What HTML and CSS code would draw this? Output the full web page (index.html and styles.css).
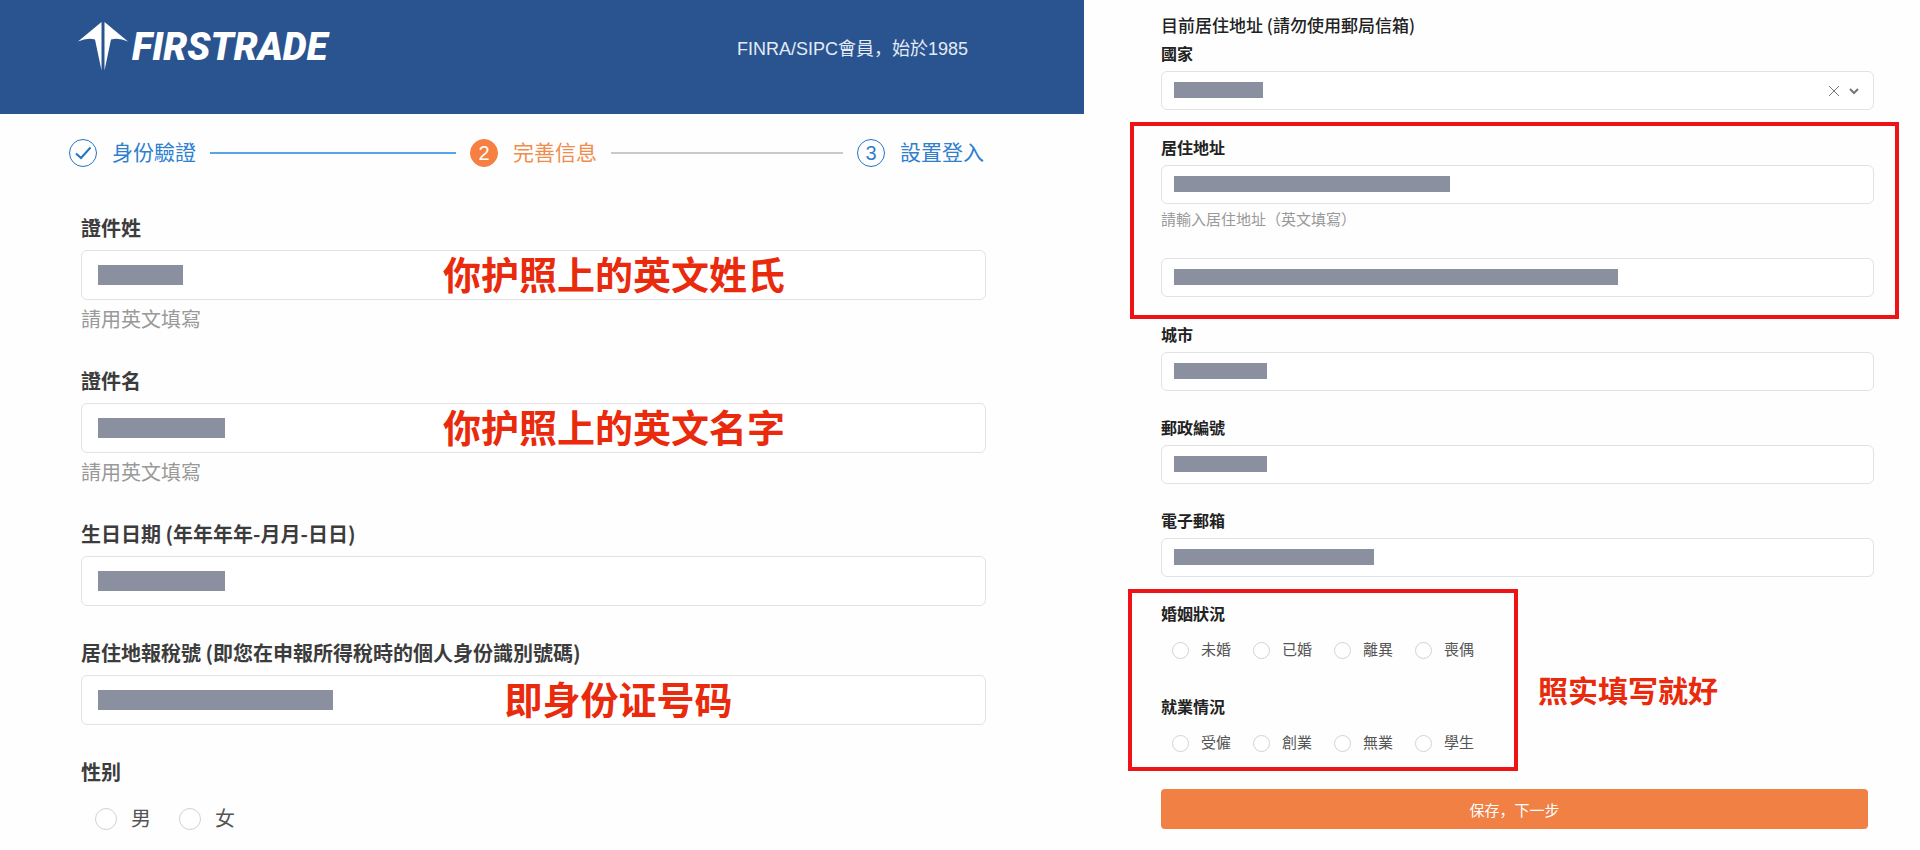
FILE: index.html
```html
<!DOCTYPE html>
<html lang="zh-Hans">
<head>
<meta charset="utf-8">
<title>Firstrade 開戶申請</title>
<link rel="stylesheet" href="styles.css">
</head>
<body>
<main class="page">
  <section class="panel">
    <header class="topbar">
      <div class="brand">
        <svg class="brand-mark" viewBox="0 0 50 50" aria-hidden="true">
          <path d="M23.500 0V48.500L17 17.500Q9 15.500 0 19.500Z"/>
          <path d="M26.500 0V48.500L33 17.500Q41 15.500 50 19.500Z"/>
        </svg>
        <span class="brand-name">FIRSTRADE</span>
      </div>
      <span class="membership">FINRA/SIPC會員，始於1985</span>
    </header>

    <ol class="steps">
      <li class="step">
        <span class="step-dot"><svg viewBox="0 0 28 28" aria-hidden="true"><path d="M7 14.500L12 19L21.500 8.500"/></svg></span>
        <span>身份驗證</span>
      </li>
      <li class="step-line step-line-done" aria-hidden="true"></li>
      <li class="step step-current">
        <span class="step-dot">2</span>
        <span>完善信息</span>
      </li>
      <li class="step-line" aria-hidden="true"></li>
      <li class="step">
        <span class="step-dot">3</span>
        <span>設置登入</span>
      </li>
    </ol>

    <form class="form form-large">
      <div class="field">
        <label class="label" for="surname">證件姓</label>
        <div class="control">
          <input class="input" id="surname" type="text">
          <span class="mask mask-surname"></span>
          <span class="note note-over">你护照上的英文姓氏</span>
        </div>
        <p class="hint">請用英文填寫</p>
      </div>
      <div class="field">
        <label class="label" for="given">證件名</label>
        <div class="control">
          <input class="input" id="given" type="text">
          <span class="mask mask-name"></span>
          <span class="note note-over">你护照上的英文名字</span>
        </div>
        <p class="hint">請用英文填寫</p>
      </div>
      <div class="field">
        <label class="label" for="birth">生日日期 (年年年年-月月-日日)</label>
        <div class="control">
          <input class="input" id="birth" type="text">
          <span class="mask mask-name"></span>
        </div>
      </div>
      <div class="field">
        <label class="label" for="tax">居住地報稅號 (即您在申報所得稅時的個人身份識別號碼)</label>
        <div class="control">
          <input class="input" id="tax" type="text">
          <span class="mask mask-tax"></span>
          <span class="note note-over note-tax">即身份证号码</span>
        </div>
      </div>
      <fieldset class="choice">
        <legend class="label">性别</legend>
        <div class="options">
          <label class="option"><input class="radio" type="radio" name="sex">男</label>
          <label class="option"><input class="radio" type="radio" name="sex">女</label>
        </div>
      </fieldset>
    </form>
  </section>

  <section class="panel panel-address">
    <form class="form form-small">
      <h2 class="title">目前居住地址 (請勿使用郵局信箱)</h2>
      <div class="field">
        <label class="label" for="country">國家</label>
        <div class="control">
          <select class="input" id="country"><option></option></select>
          <span class="mask mask-country"></span>
          <span class="select-tools">
            <button class="clear" type="button" aria-label="清除"><svg viewBox="0 0 12 12" aria-hidden="true"><path d="M1 1L11 11M11 1L1 11"/></svg></button>
            <svg class="chevron" viewBox="0 0 10 8" aria-hidden="true"><path d="M1 2L5 6L9 2"/></svg>
          </span>
        </div>
      </div>

      <div class="frame frame-address">
        <div class="field">
          <label class="label" for="address">居住地址</label>
          <div class="control">
            <input class="input" id="address" type="text">
            <span class="mask mask-address"></span>
          </div>
          <p class="hint">請輸入居住地址（英文填寫）</p>
          <div class="control">
            <input class="input" type="text" aria-label="居住地址第二行">
            <span class="mask mask-address-more"></span>
          </div>
        </div>
      </div>

      <div class="contact">
        <div class="field">
          <label class="label" for="city">城市</label>
          <div class="control">
            <input class="input" id="city" type="text">
            <span class="mask mask-city"></span>
          </div>
        </div>
        <div class="field">
          <label class="label" for="post">郵政編號</label>
          <div class="control">
            <input class="input" id="post" type="text">
            <span class="mask mask-city"></span>
          </div>
        </div>
        <div class="field">
          <label class="label" for="email">電子郵箱</label>
          <div class="control">
            <input class="input" id="email" type="email">
            <span class="mask mask-email"></span>
          </div>
        </div>
      </div>

      <div class="status">
        <div class="frame frame-status">
          <fieldset class="choice">
            <legend class="label">婚姻狀況</legend>
            <div class="options">
              <label class="option"><input class="radio" type="radio" name="marriage">未婚</label>
              <label class="option"><input class="radio" type="radio" name="marriage">已婚</label>
              <label class="option"><input class="radio" type="radio" name="marriage">離異</label>
              <label class="option"><input class="radio" type="radio" name="marriage">喪偶</label>
            </div>
          </fieldset>
          <fieldset class="choice">
            <legend class="label">就業情況</legend>
            <div class="options">
              <label class="option"><input class="radio" type="radio" name="job">受僱</label>
              <label class="option"><input class="radio" type="radio" name="job">創業</label>
              <label class="option"><input class="radio" type="radio" name="job">無業</label>
              <label class="option"><input class="radio" type="radio" name="job">學生</label>
            </div>
          </fieldset>
        </div>
        <span class="note note-side">照实填写就好</span>
      </div>

      <button class="submit" type="submit">保存，下一步</button>
    </form>
  </section>
</main>
</body>
</html>
```
FILE: styles.css
```css
* {
  box-sizing: border-box;
}

body {
  margin: 0;
  background: #fefefe;
  color: #3c3c3c;
  font-family: "Liberation Sans", "Noto Sans CJK SC", sans-serif;
}

.page {
  display: grid;
  grid-template-columns: 1084fr 836fr;
}

.panel-address {
  padding: 14px 46px 20px 77px;
}

/* Header */

.topbar {
  display: flex;
  justify-content: space-between;
  align-items: flex-start;
  height: 114px;
  padding: 22px 116px 0 78px;
  background: #2a548f;
}

.brand {
  display: flex;
  align-items: center;
  gap: 4px;
}

.brand-mark {
  width: 50px;
  height: 50px;
  fill: #fff;
}

.brand-name {
  color: #fff;
  font: italic 900 38px/50px Roboto, "Liberation Sans", sans-serif;
}

.membership {
  margin-top: 15px;
  color: #e3ebf6;
  font-size: 18px;
  line-height: 24px;
}

/* Progress steps */

.steps {
  display: flex;
  align-items: center;
  gap: 14px;
  margin: 25px 100px 47px 69px;
  padding: 0;
  list-style: none;
}

.step {
  display: flex;
  align-items: center;
  gap: 15px;
  color: #2f7fcf;
  font-size: 21px;
  line-height: 28px;
}

.step-dot {
  display: flex;
  align-items: center;
  justify-content: center;
  width: 28px;
  height: 28px;
  border: 1px solid #2474c4;
  border-radius: 50%;
  font-size: 20px;
}

.step-dot svg {
  flex: none;
  width: 28px;
  height: 28px;
  fill: none;
  stroke: #2474c4;
  stroke-width: 2;
}

.step-current {
  color: #f08c4c;
}

.step-current .step-dot {
  border-color: #f77f41;
  background: #f77f41;
  color: #fff;
}

.step-line {
  flex: 233;
  height: 2px;
  background: #c9c9c9;
}

.step-line-done {
  flex: 247;
  background: #56a5e6;
}

/* Forms */

.form-large {
  --size: 20px;
  --hint-size: 20px;
  --line: 28px;
  --label-gap: 8px;
  --control: 50px;
  --inset: 17px;
  --mask: 20px;
  --mask-top: 15px;
  --radio: 22px;
  --radio-gap: 14px;
  display: flex;
  flex-direction: column;
  gap: 33px;
  margin: 0 98px 16px 81px;
}

.form-small {
  --size: 16px;
  --hint-size: 15px;
  --line: 20px;
  --label-gap: 8px;
  --control: 39px;
  --inset: 13px;
  --mask: 16px;
  --mask-top: 11px;
  --radio: 17px;
  --radio-gap: 12px;
  color: #222;
}

.title {
  margin: 0 0 7px;
  font-size: 17px;
  font-weight: 500;
  line-height: 22px;
}

.label {
  display: block;
  margin-bottom: var(--label-gap);
  padding: 0;
  font-size: var(--size);
  font-weight: 700;
  line-height: var(--line);
}

.title,
.label {
  font-family: "Noto Sans CJK SC", sans-serif;
}

.control {
  position: relative;
}

.input {
  display: block;
  width: 100%;
  height: var(--control);
  padding: 0 var(--inset);
  border: 1px solid #e2e2e4;
  border-radius: 6px;
  background: #fff;
  font-size: var(--size);
  appearance: none;
}

.mask {
  position: absolute;
  top: var(--mask-top);
  left: var(--inset);
  height: var(--mask);
  background: #8b90a0;
}

.mask-surname { width: 85px; }
.mask-name { width: 127px; }
.mask-tax { width: 235px; }
.mask-country { width: 89px; }
.mask-address { width: 276px; }
.mask-address-more { width: 444px; }
.mask-city { width: 93px; }
.mask-email { width: 200px; }

.hint {
  margin: 6px 0 0;
  color: #999;
  font-size: var(--hint-size);
  line-height: var(--line);
}

.form-small .hint {
  margin-bottom: 28px;
}

.select-tools {
  position: absolute;
  top: 0;
  right: 15px;
  display: flex;
  align-items: center;
  gap: 9px;
  height: 100%;
}

.select-tools svg {
  display: block;
  fill: none;
  stroke: #777;
}

.clear {
  padding: 0;
  border: 0;
  background: none;
}

.clear svg {
  width: 12px;
  height: 12px;
}

.select-tools .chevron {
  width: 10px;
  height: 8px;
  stroke-width: 2;
}

.choice {
  min-width: 0;
  margin: 0;
  padding: 0;
  border: 0;
}

.options {
  display: flex;
  gap: 28px;
  padding: 11px 0 0 14px;
  color: #555;
  font-size: var(--hint-size);
  line-height: var(--line);
}

.form-small .options {
  gap: 22px;
  padding: 9px 0 0 11px;
}

.option {
  display: flex;
  align-items: center;
  gap: var(--radio-gap);
}

.radio {
  width: var(--radio);
  height: var(--radio);
  margin: 0;
  border: 1px solid #d2d2d2;
  border-radius: 50%;
  background: #fff;
  appearance: none;
}

/* Red guidance marks */

.note {
  color: #ea2a0c;
  font-family: "Noto Sans CJK SC", sans-serif;
  font-weight: 700;
  white-space: nowrap;
}

.note-over {
  position: absolute;
  top: 0;
  left: 40%;
  font-size: 38px;
  line-height: 46px;
}

.note-tax {
  right: 28%;
  left: auto;
}

.frame {
  border: 4px solid #ee1317;
}

.frame-address {
  margin: 12px -25px 5px -31px;
  padding: 11px 21px 18px 27px;
}

.contact {
  display: flex;
  flex-direction: column;
  gap: 26px;
}

.status {
  display: flex;
  align-items: center;
  gap: 20px;
  margin: 12px 0 18px -33px;
}

.frame-status {
  display: flex;
  flex-direction: column;
  gap: 36px;
  padding: 10px 40px 14px 29px;
}

.note-side {
  padding-top: 18px;
  font-size: 30px;
  line-height: 40px;
}

.submit {
  display: block;
  width: calc(100% - 6px);
  height: 40px;
  border: 0;
  border-radius: 4px;
  background: #f08044;
  color: #fff;
  font-family: "Noto Sans CJK SC", sans-serif;
  font-size: 15px;
}
```
